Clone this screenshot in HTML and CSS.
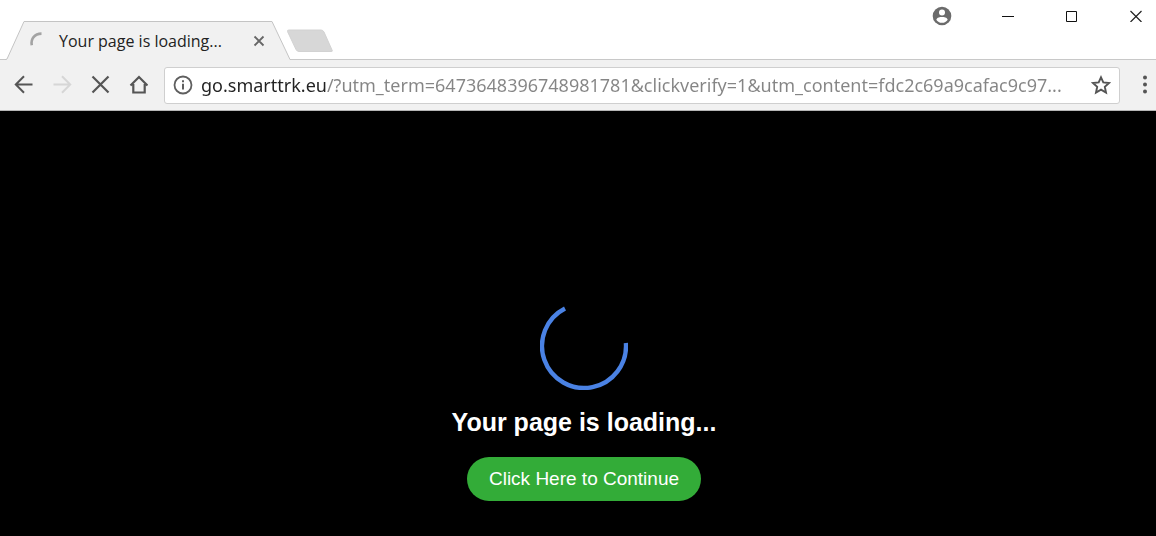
FILE: index.html
```html
<!DOCTYPE html>
<html lang="en">

<head>
    <meta charset="UTF-8">
    <meta name="viewport" content="width=device-width, initial-scale=1.0">
    <title>Your page is loading...</title>
    <link rel="stylesheet" href="styles.css">
</head>

<body>

    <header class="titlebar">
        <div class="tab">
            <svg class="tab-shape" viewBox="0 0 286 39" preserveAspectRatio="none">
                <path d="M0 38.5H1L2 38L19 .5H267L285 38.5H286V39H0Z" fill="#f1f1f1"/>
                <path d="M0 38.5H1L2 38L19 .5H267L285 38.5H286" fill="none" stroke="#c4c4c4"/>
            </svg>
            <svg class="tab-spinner" width="18" height="18" viewBox="0 0 18 18">
                <path d="M2.800 13.200C1.500 7 5.500 1.600 12.500 1.600" fill="none" stroke="#a3a3a3" stroke-width="2.600"/>
            </svg>
            <span class="tab-title">Your page is loading...</span>
            <button class="tab-close" aria-label="Close tab">
                <svg width="12" height="12" viewBox="0 0 12 12"><path d="M1.500 1.500L10.500 10.500M10.500 1.500L1.500 10.500" fill="none" stroke="#666" stroke-width="1.800"/></svg>
            </button>
        </div>
        <button class="new-tab" aria-label="New tab">
            <svg width="48" height="24" viewBox="0 0 48 24"><path d="M3 1H35Q37 1 38 3L46 21Q47 22.500 45 22.500H13Q11 22.500 10 20.500L1.500 2.500Q1 1 3 1Z" fill="#d7d7d7" stroke="#d2d2d2"/></svg>
        </button>
        <div class="window-controls">
            <button class="profile" aria-label="Profile">
                <svg width="20" height="20" viewBox="0 0 20 20">
                    <circle cx="10" cy="10" r="9.300" fill="#6b6b6b"/>
                    <circle cx="10" cy="6.500" r="3" fill="#fff"/>
                    <path d="M4.300 13.700C5 11.300 8 10.900 10 10.900S15 11.300 15.700 13.700C14.500 15.700 12.500 16.800 10 16.800S5.500 15.700 4.300 13.700Z" fill="#fff"/>
                </svg>
            </button>
            <button aria-label="Minimize">
                <svg width="12" height="12" viewBox="0 0 12 12"><path d="M0 6.500H12" stroke="#111"/></svg>
            </button>
            <button aria-label="Maximize">
                <svg width="12" height="12" viewBox="0 0 12 12"><path d="M.5 1.500H10.500V11.500H.5Z" fill="none" stroke="#111"/></svg>
            </button>
            <button aria-label="Close">
                <svg width="12" height="12" viewBox="0 0 12 12"><path d="M.5 1L11.500 12M11.500 1L.5 12" stroke="#222" stroke-width="1.200"/></svg>
            </button>
        </div>
    </header>

    <nav class="toolbar">
        <button aria-label="Back">
            <svg width="20" height="20" viewBox="0 0 20 20"><path d="M18.500 9.500H2.500M10 1.300L1.800 9.500L10 17.700" fill="none" stroke="#555" stroke-width="2"/></svg>
        </button>
        <button aria-label="Forward" disabled>
            <svg width="20" height="20" viewBox="0 0 20 20"><path d="M1.500 9.500H17.500M10 1.300L18.200 9.500L10 17.700" fill="none" stroke="#d6d6d6" stroke-width="2"/></svg>
        </button>
        <button aria-label="Stop">
            <svg width="20" height="20" viewBox="0 0 20 20"><path d="M2.500 1.500L18.500 17.500M18.500 1.500L2.500 17.500" fill="none" stroke="#555" stroke-width="2.200"/></svg>
        </button>
        <button aria-label="Home">
            <svg width="20" height="20" viewBox="0 0 20 20"><path d="M2.500 10.500L11 2L19.500 10.500M5.300 9V17.500H16.700V9" fill="none" stroke="#555" stroke-width="2.200"/></svg>
        </button>
        <form class="address-bar">
            <button type="button" aria-label="Site information">
                <svg width="20" height="20" viewBox="0 0 20 20">
                    <circle cx="10" cy="10" r="8.500" fill="none" stroke="#5f5f5f" stroke-width="1.800"/>
                    <path d="M10 8.800V14.500M10 5.300V7.300" stroke="#5f5f5f" stroke-width="2"/>
                </svg>
            </button>
            <input type="text" class="url" aria-label="Address" spellcheck="false" value="go.smarttrk.eu/?utm_term=6473648396748981781&amp;clickverify=1&amp;utm_content=fdc2c69a9cafac9c97...">
            <button type="button" aria-label="Bookmark this page">
                <svg width="20" height="20" viewBox="0 0 20 20"><path d="M10 2.300L12.300 7.400L18 8L13.800 11.800L15 17.500L10 14.600L5 17.500L6.200 11.800L2 8L7.700 7.400Z" fill="none" stroke="#555" stroke-width="1.900"/></svg>
            </button>
        </form>
        <button class="menu" aria-label="Menu">
            <svg width="6" height="20" viewBox="0 0 6 20" fill="#555"><circle cx="3" cy="2.500" r="2"/><circle cx="3" cy="9.500" r="2"/><circle cx="3" cy="16.500" r="2"/></svg>
        </button>
    </nav>

    <main class="page">
        <svg class="loader" width="88" height="88" viewBox="0 0 88 88">
            <path d="M85.900 41A42 42 0 1 1 25 6.500" fill="none" stroke="#4a82e4" stroke-width="4.400"/>
        </svg>
        <h1>Your page is loading...</h1>
        <button class="continue">Click Here to Continue</button>
    </main>

</body>

</html>
```

FILE: styles.css
```css
body {
    margin: 0;
    min-height: 100vh;
    display: flex;
    flex-direction: column;
    font-family: "Open Sans", "Noto Sans", sans-serif;
    background-color: #000;
}

button {
    display: flex;
    align-items: center;
    justify-content: center;
    padding: 0;
    border: none;
    background: none;
    cursor: pointer;
}

svg {
    display: block;
    flex-shrink: 0;
}

.titlebar {
    display: flex;
    align-items: flex-end;
    height: 59px;
    padding-left: 5px;
    background-color: #fff;
    border-bottom: 1px solid #c8c8c8;
}

.tab {
    position: relative;
    display: flex;
    align-items: center;
    box-sizing: border-box;
    width: 286px;
    height: 39px;
    margin-bottom: -1px;
    padding: 0 26px 0 24px;
}

.tab-shape {
    position: absolute;
    top: 0;
    left: 0;
    width: 100%;
    height: 100%;
}

.tab-spinner,
.tab-title,
.tab-close {
    position: relative;
}

.tab-title {
    flex: 1;
    margin-left: 12px;
    font-size: 16px;
    line-height: 20px;
    color: #222;
    white-space: nowrap;
}

.new-tab {
    margin: 0 0 6px -5px;
}

.window-controls {
    display: flex;
    align-self: flex-start;
    align-items: center;
    gap: 52px;
    height: 32px;
    margin-left: auto;
    padding-right: 14px;
}

.profile {
    margin-right: -2px;
}

.toolbar {
    display: flex;
    align-items: center;
    gap: 18px;
    height: 50px;
    padding: 0 8px 0 14px;
    background-color: #f1f1f1;
    border-bottom: 1px solid #b5b5b5;
}

.address-bar {
    flex: 1;
    display: flex;
    align-items: center;
    min-width: 0;
    height: 35px;
    margin: 0 4px 0 -2px;
    padding: 0 8px;
    border: 1px solid #cfcfcf;
    border-radius: 3px;
    background-color: #fff;
}

/* host part is dark, the rest of the address is grey */
.url {
    flex: 1;
    min-width: 0;
    margin: 0 8px;
    padding: 0;
    border: none;
    outline: none;
    font-family: "Noto Sans", "Open Sans", sans-serif;
    font-size: 18px;
    color: transparent;
    caret-color: #222;
    background: linear-gradient(to right, #222 126px, #858585 126px);
    background-clip: text;
    -webkit-background-clip: text;
}

.page {
    flex: 1;
    display: flex;
    flex-direction: column;
    align-items: center;
    padding: 191px 0 0 12px;
    font-family: "Liberation Sans", Arial, sans-serif;
    background-color: #000;
}

.page h1 {
    margin: 16px 0 19px;
    font-size: 25px;
    line-height: 32px;
    color: #fff;
}

.continue {
    height: 44px;
    padding: 0 22px;
    border-radius: 22px;
    font-family: inherit;
    font-size: 19px;
    color: #fff;
    background-color: #33ac38;
}
```
